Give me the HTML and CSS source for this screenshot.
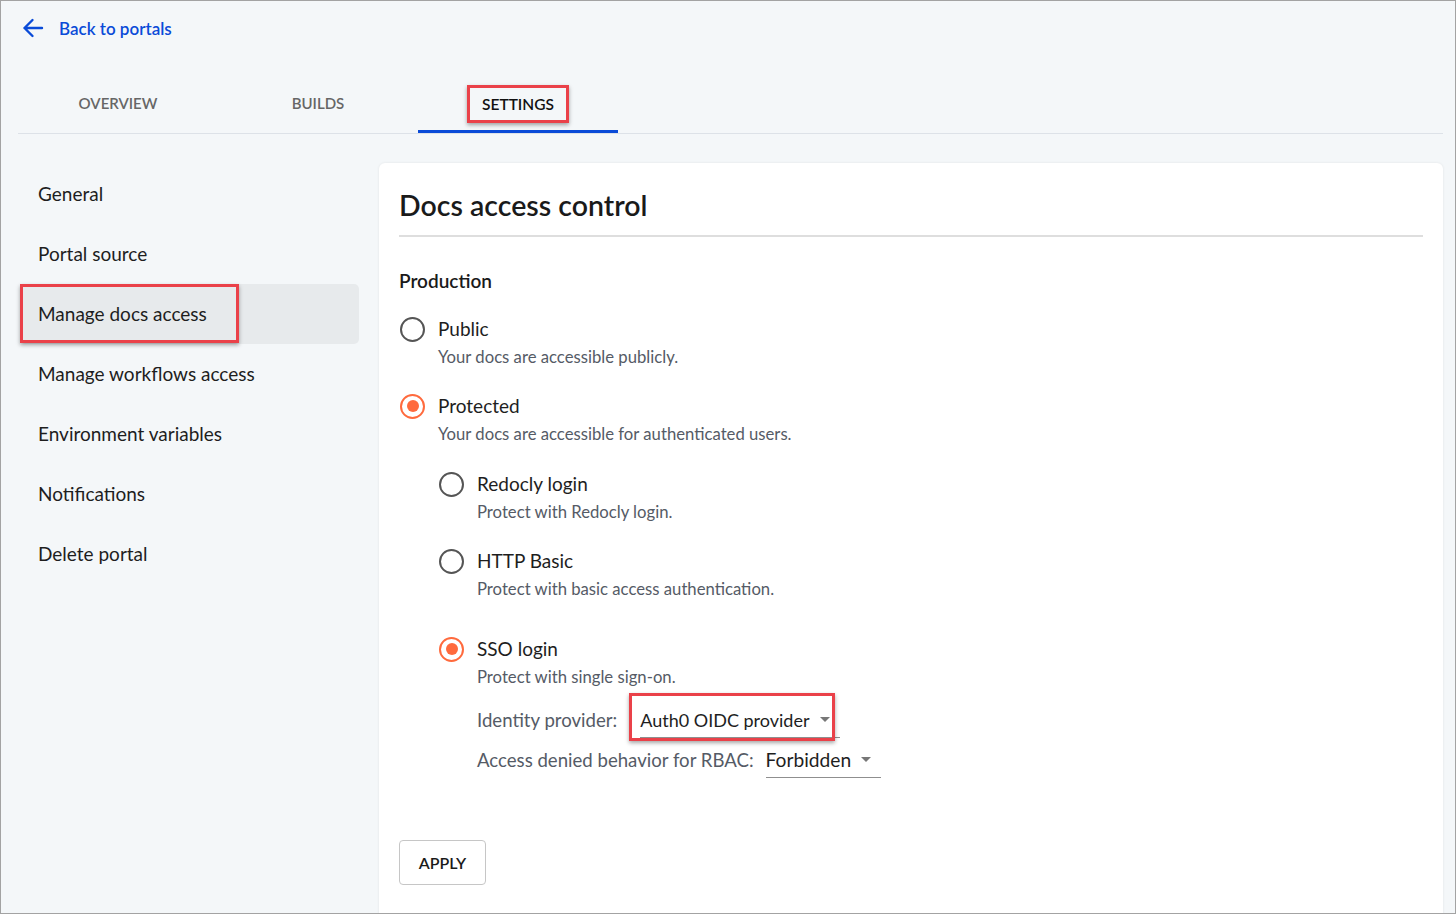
FILE: index.html
```html
<!DOCTYPE html>
<html lang="en">
<head>
<meta charset="utf-8">
<title>Docs access control</title>
<link rel="stylesheet" href="styles.css">
</head>
<body>
<div class="frame">
  <header class="top">
    <a class="back" href="#">
      <svg class="back-icon" width="24" height="24" viewBox="0 0 24 24" aria-hidden="true"><path d="M21 12H3.5M11.5 4 3.5 12l8 8" fill="none" stroke="#0a4bd8" stroke-width="2.4" stroke-linecap="round" stroke-linejoin="round"/></svg>
      <span>Back to portals</span>
    </a>
  </header>
  <nav class="tabs">
    <div class="tab">OVERVIEW</div>
    <div class="tab">BUILDS</div>
    <div class="tab active"><span class="mark">SETTINGS</span></div>
  </nav>
  <div class="body">
    <aside class="side">
      <div class="side-item">General</div>
      <div class="side-item">Portal source</div>
      <div class="side-item active">Manage docs access<span class="mark-box side-mark"></span></div>
      <div class="side-item">Manage workflows access</div>
      <div class="side-item">Environment variables</div>
      <div class="side-item">Notifications</div>
      <div class="side-item">Delete portal</div>
    </aside>
    <main class="card">
      <h1 class="title">Docs access control</h1>
      <h2 class="section">Production</h2>
      <div class="options">
        <div class="opt">
          <span class="radio"></span>
          <div class="opt-text">
            <div class="lbl">Public</div>
            <div class="desc">Your docs are accessible publicly.</div>
          </div>
        </div>
        <div class="opt">
          <span class="radio on"></span>
          <div class="opt-text">
            <div class="lbl">Protected</div>
            <div class="desc">Your docs are accessible for authenticated users.</div>
            <div class="sub">
              <div class="opt">
                <span class="radio"></span>
                <div class="opt-text">
                  <div class="lbl">Redocly login</div>
                  <div class="desc">Protect with Redocly login.</div>
                </div>
              </div>
              <div class="opt">
                <span class="radio"></span>
                <div class="opt-text">
                  <div class="lbl">HTTP Basic</div>
                  <div class="desc">Protect with basic access authentication.</div>
                </div>
              </div>
              <div class="opt opt-sso">
                <span class="radio on"></span>
                <div class="opt-text">
                  <div class="lbl">SSO login</div>
                  <div class="desc">Protect with single sign-on.</div>
                  <div class="fields">
                    <div class="field">
                      <span class="field-lbl field-lbl-idp">Identity provider:</span>
                      <span class="select select-idp">Auth0 OIDC provider<span class="caret"></span><span class="mark-box idp-mark"></span></span>
                    </div>
                    <div class="field">
                      <span class="field-lbl field-lbl-rbac">Access denied behavior for RBAC:</span>
                      <span class="select select-rbac">Forbidden<span class="caret"></span></span>
                    </div>
                  </div>
                </div>
              </div>
            </div>
          </div>
        </div>
      </div>
      <button class="apply" type="button">APPLY</button>
    </main>
  </div>
</div>
</body>
</html>
```
FILE: styles.css
```css
* { box-sizing: border-box; }
html, body { margin: 0; padding: 0; }
body {
  font-family: Lato, "Liberation Sans", sans-serif;
  color: #1e1e1e;
  background: #f4f7f9;
}
.frame {
  width: 1456px;
  height: 914px;
  border: 1px solid #a3a3a3;
  background: #f4f7f9;
  overflow: hidden;
}
.top {
  height: 54px;
  display: flex;
  align-items: center;
  padding-left: 20px;
}
.back {
  display: flex;
  align-items: center;
  gap: 14px;
  text-decoration: none;
  color: #0a4bd8;
  font-size: 17px;
  font-weight: 600;
}
.back-icon { display: block; }
.tabs {
  display: flex;
  margin: 18px 12px 0 17px;
  border-bottom: 1px solid #dde2e8;
}
.tab {
  width: 200px;
  height: 60px;
  display: flex;
  align-items: center;
  justify-content: center;
  font-size: 15px;
  font-weight: 600;
  color: #666;
}
.tab.active {
  color: #111;
  font-size: 15.5px;
  border-bottom: 3px solid #0a4bd8;
  padding-top: 4px;
}
.mark {
  display: inline-block;
  border: 3px solid #ea4149;
  padding: 7px 12px;
  box-shadow: 0 2px 4px rgba(0, 0, 0, 0.35);
}
.body {
  display: flex;
  gap: 20px;
  padding: 29px 12px 0 19px;
}
.side {
  width: 339px;
  flex: none;
  padding-top: 1px;
}
.side-item {
  position: relative;
  height: 60px;
  display: flex;
  align-items: center;
  padding: 0 0 2px 18px;
  font-size: 19px;
  color: #1e1e1e;
  border-radius: 5px;
}
.side-item.active { background: #e7eaec; }
.mark-box {
  position: absolute;
  border: 3px solid #ea4149;
  box-shadow: 0 2px 4px rgba(0, 0, 0, 0.35);
  pointer-events: none;
}
.side-mark { left: 0; top: 0; width: 219px; height: 59px; }
.card {
  flex: 1;
  min-height: 800px;
  background: #fff;
  border-radius: 6px;
  box-shadow: 0 0 3px rgba(0, 0, 0, 0.08);
  padding: 20px 20px 0;
}
.title {
  margin: 0;
  font-size: 28.5px;
  line-height: 44px;
  font-weight: 600;
  color: #1a1a1a;
  padding-bottom: 8px;
  border-bottom: 2px solid #dedede;
}
.section {
  margin: 32px 0 0;
  font-size: 19px;
  line-height: 24px;
  font-weight: 600;
  color: #1a1a1a;
}
.options { margin-top: 22px; padding-left: 1px; }
.opt { display: flex; gap: 13px; }
.opt + .opt { margin-top: 23px; }
.opt.opt-sso { margin-top: 34px; }
.radio {
  flex: none;
  width: 25px;
  height: 25px;
  margin-top: 1.5px;
  border: 2.5px solid #555;
  border-radius: 50%;
  display: flex;
  align-items: center;
  justify-content: center;
}
.radio.on { border-color: #ff6a3d; }
.radio.on::after {
  content: "";
  width: 12px;
  height: 12px;
  border-radius: 50%;
  background: #ff6a3d;
}
.lbl { font-size: 19px; line-height: 28px; color: #1e1e1e; }
.desc { margin-top: 2px; font-size: 16.7px; line-height: 24px; color: #555b66; }
.sub { margin-top: 24px; padding-left: 1px; }
.fields { margin-top: 13px; }
.field { display: flex; align-items: center; height: 36px; }
.field + .field { margin-top: 4px; }
.field-lbl { font-size: 18.6px; color: #555b66; }
.field-lbl-idp { margin-right: 23px; }
.field-lbl-rbac { margin-right: 12px; }
.select {
  position: relative;
  height: 36px;
  display: flex;
  align-items: center;
  padding-right: 30px;
  font-size: 18.5px;
  color: #1e1e1e;
  border-bottom: 1px solid #8f8f8f;
}
.select-idp { font-size: 18px; }
.select-rbac { font-size: 19.2px; }
.caret {
  position: absolute;
  right: 10px;
  top: 50%;
  margin-top: -3px;
  width: 0;
  height: 0;
  border-left: 5.5px solid transparent;
  border-right: 5.5px solid transparent;
  border-top: 5.5px solid #777;
}
.idp-mark { left: -11px; top: -9px; width: 206px; height: 48px; }
.apply {
  margin-top: 62px;
  width: 87px;
  height: 45px;
  background: #fff;
  border: 1px solid #c6c6c6;
  border-radius: 4px;
  font-family: inherit;
  font-size: 16px;
  font-weight: 600;
  color: #1a1a1a;
  cursor: pointer;
}
```
